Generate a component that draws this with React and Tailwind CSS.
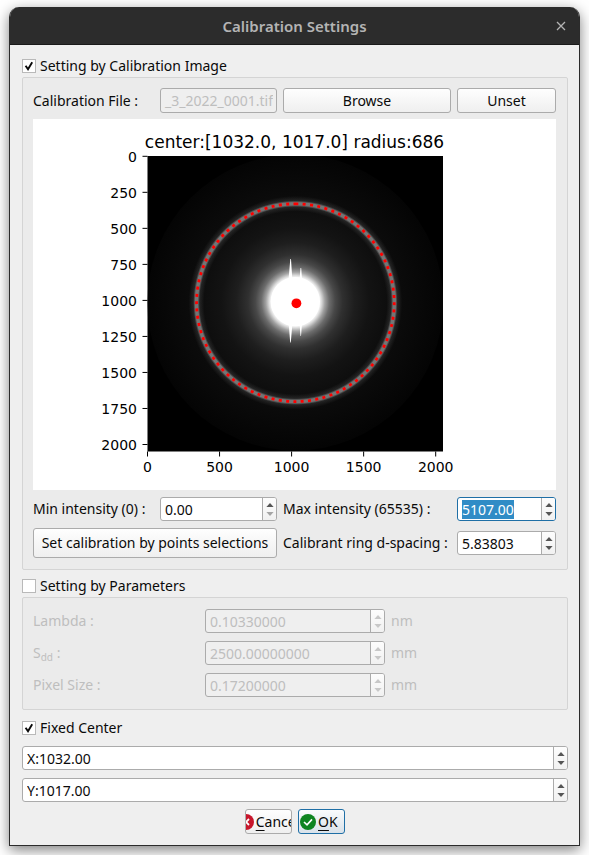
import React, { useEffect, useRef, useState } from "react";

function Arrow({ up }) {
  return (
    <svg width="8" height="4" viewBox="0 0 8 4" fill="currentColor" aria-hidden="true">
      <path d={up ? "M4 0 L7.6 4 H0.4 Z" : "M4 4 L7.6 0 H0.4 Z"} />
    </svg>
  );
}

function SpinBox({ id, label, value, disabled, active, atMin }) {
  const ref = useRef(null);
  const [text, setText] = useState(value);

  useEffect(() => {
    if (active && ref.current) {
      ref.current.focus();
      ref.current.select();
    }
  }, [active]);

  return (
    <div
      className={
        "flex h-6 w-full min-w-0 overflow-hidden rounded-[3px] border " +
        (active ? "border-[#1f6fa6] bg-white" : disabled ? "border-[#ababab] bg-[#efefef]" : "border-[#ababab] bg-white")
      }
    >
      <input
        id={id}
        ref={ref}
        type="text"
        aria-label={label}
        value={text}
        disabled={disabled}
        onChange={(e) => setText(e.target.value)}
        className="h-full w-full min-w-0 flex-1 bg-transparent px-1 leading-[17px] outline-none selection:bg-[#308cc6] selection:text-white disabled:text-[#bebebe]"
      />
      <div
        className={
          "flex w-[14px] shrink-0 flex-col border-l border-[#ababab] bg-linear-to-b from-[#fdfdfd] to-[#f1f1f1] " +
          (disabled ? "text-[#c8c8c8]" : "text-[#555555]")
        }
      >
        <button type="button" aria-label="Increase" disabled={disabled} className="flex flex-1 items-center justify-center pt-[2px]">
          <Arrow up />
        </button>
        <button
          type="button"
          aria-label="Decrease"
          disabled={disabled}
          className={"flex flex-1 items-center justify-center pb-[2px] " + (atMin ? "text-[#a5a5a5]" : "")}
        >
          <Arrow />
        </button>
      </div>
    </div>
  );
}

function Check({ label, initial }) {
  const [on, setOn] = useState(initial);
  return (
    <label className="flex h-[22px] items-center gap-1 self-start">
      <span className="relative flex">
        <input
          type="checkbox"
          checked={on}
          onChange={() => setOn(!on)}
          className="size-[14px] appearance-none border border-[#b9b9b9] bg-white outline-none"
        />
        {on && (
          <svg className="pointer-events-none absolute inset-0" width="14" height="14" viewBox="0 0 14 14" fill="none" stroke="#0a0a0a" aria-hidden="true">
            <path d="M3.6 6.8 L6 10.2 L10.2 3.2" strokeWidth="1.9" />
          </svg>
        )}
      </span>
      {label}
    </label>
  );
}

function PushButton({ children, className = "h-[25px]" }) {
  return (
    <button
      type="button"
      className={"w-full overflow-hidden rounded-[3px] border border-[#ababab] bg-linear-to-b from-[#fefefe] to-[#efefef] whitespace-nowrap " + className}
    >
      {children}
    </button>
  );
}

const X_TICKS = [0, 500, 1000, 1500, 2000];
const Y_TICKS = [0, 250, 500, 750, 1000, 1250, 1500, 1750, 2000];
const SCALE = 0.1441;

function DiffractionPlot() {
  return (
    <svg
      className="h-full w-full bg-white font-['DejaVu_Sans',sans-serif]"
      viewBox="33 119 523 371"
      role="img"
      aria-label="Calibration image"
    >
      <defs>
        <radialGradient id="field" gradientUnits="userSpaceOnUse" cx="295.3" cy="301.7" r="148">
          <stop offset="0.16" stopColor="#ffffff" />
          <stop offset="0.175" stopColor="#e0e0e0" />
          <stop offset="0.2" stopColor="#a0a0a0" />
          <stop offset="0.23" stopColor="#6c6c6c" />
          <stop offset="0.27" stopColor="#484848" />
          <stop offset="0.32" stopColor="#303030" />
          <stop offset="0.4" stopColor="#1e1e1e" />
          <stop offset="0.5" stopColor="#131313" />
          <stop offset="0.62" stopColor="#0e0e0e" />
          <stop offset="0.72" stopColor="#0b0b0b" />
          <stop offset="1" stopColor="#040404" />
        </radialGradient>
        <radialGradient id="ring" gradientUnits="userSpaceOnUse" cx="295.4" cy="302.7" r="110">
          <stop offset="0.83" stopColor="#808080" stopOpacity="0" />
          <stop offset="0.87" stopColor="#808080" stopOpacity="0.2" />
          <stop offset="0.888" stopColor="#808080" stopOpacity="0.9" />
          <stop offset="0.91" stopColor="#808080" stopOpacity="0.9" />
          <stop offset="0.928" stopColor="#808080" stopOpacity="0.2" />
          <stop offset="0.97" stopColor="#808080" stopOpacity="0" />
        </radialGradient>
        <clipPath id="axes">
          <rect x="147.5" y="156" width="295.5" height="295.5" />
        </clipPath>
      </defs>
      <g clipPath="url(#axes)">
        <rect x="147" y="155" width="297" height="298" fill="#000000" />
        <circle cx="295.3" cy="302.5" r="148" fill="url(#field)" />
        <circle cx="295.4" cy="302.7" r="110" fill="url(#ring)" />
        <circle cx="295.3" cy="301.7" r="24.6" fill="#ffffff" />
        <path
          d="M290.3 259 L291 259 L292.3 279 H288.6 Z M300.5 268 L301.2 268 L302 279 H299.6 Z M288.8 325 H292.3 L290.8 342.5 L290.2 342.5 Z M299.6 324 H302 L301 336 L300.5 336 Z"
          fill="#ffffff"
        />
        <path
          d="M295.4 203.8 A98.9 98.9 0 0 1 295.4 401.6 A98.9 98.9 0 0 1 295.4 203.8"
          fill="none"
          stroke="#ff0000"
          strokeWidth="2.8"
          strokeDasharray="3 4.36"
        />
        <circle cx="296.4" cy="303.3" r="4.9" fill="#ff0000" />
      </g>
      <text x="294.5" y="148" textAnchor="middle" fontSize="17">
        center:[1032.0, 1017.0] radius:686
      </text>
      {Y_TICKS.map((t) => (
        <g key={t}>
          <path d={`M142.5 ${156.3 + t * SCALE} h5`} stroke="#000000" />
          <text x="137" y={161.6 + t * SCALE} textAnchor="end" fontSize="14">
            {t}
          </text>
        </g>
      ))}
      {X_TICKS.map((t) => (
        <g key={t}>
          <path d={`M${147.5 + t * SCALE} 451.5 v5`} stroke="#000000" />
          <text x={147.5 + t * SCALE} y="472" textAnchor="middle" fontSize="14">
            {t}
          </text>
        </g>
      ))}
    </svg>
  );
}

function FileField() {
  const ref = useRef(null);
  useEffect(() => {
    ref.current.scrollLeft = ref.current.scrollWidth;
  }, []);
  return (
    <input
      id="calibration-file"
      ref={ref}
      type="text"
      disabled
      defaultValue="_3_2022_0001.tif"
      className="h-[25px] w-full min-w-0 rounded-[3px] border border-[#ababab] bg-[#efefef] pr-[3px] text-right text-[#bebebe]"
    />
  );
}

const PARAMETERS = [
  { id: "lambda", name: "Lambda :", value: "0.10330000", unit: "nm" },
  {
    id: "sdd",
    name: (
      <>
        S<sub className="text-[10px]">dd</sub> :
      </>
    ),
    value: "2500.00000000",
    unit: "mm",
  },
  { id: "pixel-size", name: "Pixel Size :", value: "0.17200000", unit: "mm" },
];

export default function App() {
  return (
    <div className="min-h-screen bg-white px-[9px] pt-[7px] pb-[9px] font-['Noto_Sans','Open_Sans',sans-serif] text-sm leading-5 text-[#0a0a0a]">
      <section className="overflow-hidden rounded-t-[10px] border-x border-b border-[#2b2b2b] bg-[#efefef] shadow-[0_4px_14px_rgba(0,0,0,0.5)]">
        <header className="grid h-[38px] grid-cols-[1fr_auto_1fr] items-center border-b border-[#1a1a1a] bg-[#2c2c2c] text-[#b4b4b4]">
          <h1 className="col-start-2 text-[15px] font-semibold">Calibration Settings</h1>
          <button type="button" aria-label="Close" className="mr-[13px] justify-self-end">
            <svg width="10" height="10" viewBox="0 0 10 10" fill="none" stroke="currentColor" strokeWidth="1.3">
              <path d="M1 1 L9 9 M9 1 L1 9" />
            </svg>
          </button>
        </header>

        <main className="flex flex-col pt-[10px] pr-[11px] pb-[11px] pl-3">
          <Check label="Setting by Calibration Image" initial />
          <div className="grid grid-cols-[121px_117px_1fr_99px] items-center gap-[6px] rounded-[2px] border border-[#d4d4d4] bg-[#ebebeb] pt-[10px] pr-[11px] pb-[11px] pl-[10px] whitespace-nowrap">
            <label htmlFor="calibration-file">Calibration File :</label>
            <FileField />
            <PushButton>Browse</PushButton>
            <PushButton>Unset</PushButton>

            <div className="col-span-4 h-[371px]">
              <DiffractionPlot />
            </div>

            <label htmlFor="min-intensity">Min intensity (0) :</label>
            <div className="flex h-[26px] items-center">
              <SpinBox id="min-intensity" value="0.00" atMin />
            </div>
            <label htmlFor="max-intensity">Max intensity (65535) :</label>
            <SpinBox id="max-intensity" value="5107.00" active />

            <div className="col-span-2">
              <PushButton className="h-[30px]">Set calibration by points selections</PushButton>
            </div>
            <label htmlFor="d-spacing">Calibrant ring d-spacing :</label>
            <SpinBox id="d-spacing" value="5.83803" />
          </div>

          <div className="mt-[5px] flex">
            <Check label="Setting by Parameters" initial={false} />
          </div>
          <div className="flex flex-col gap-2 rounded-[2px] border border-[#d4d4d4] bg-[#ebebeb] pt-[11px] pr-[11px] pb-3 pl-[10px] text-[#bebebe]">
            {PARAMETERS.map((p) => (
              <div key={p.id} className="grid h-6 grid-cols-[166px_180px_1fr] items-center gap-[6px]">
                <label htmlFor={p.id}>{p.name}</label>
                <SpinBox id={p.id} value={p.value} disabled />
                <span>{p.unit}</span>
              </div>
            ))}
          </div>

          <div className="mt-[7px] flex">
            <Check label="Fixed Center" initial />
          </div>
          <div className="mt-[7px] flex flex-col gap-2">
            <SpinBox label="Center X" value="X:1032.00" />
            <SpinBox label="Center Y" value="Y:1017.00" />
          </div>

          <div className="mt-[7px] flex justify-center gap-[6px]">
            <button
              type="button"
              className="flex h-[25px] w-[47px] items-center justify-center gap-[2px] overflow-hidden rounded-[3px] border border-[#ababab] bg-linear-to-b from-[#fefefe] to-[#efefef]"
            >
              <svg className="shrink-0" width="16" height="16" viewBox="0 0 16 16" fill="none" aria-hidden="true">
                <circle cx="8" cy="8" r="8" fill="#c7162b" />
                <path d="M5 5 L11 11 M11 5 L5 11" stroke="#ffffff" strokeWidth="1.8" />
              </svg>
              <span>
                <span className="underline underline-offset-3">C</span>ancel
              </span>
            </button>
            <button
              type="button"
              className="flex h-[25px] w-[47px] items-center gap-[2px] overflow-hidden rounded-[3px] border border-[#1f6fa6] bg-linear-to-b from-[#fafbfc] to-[#d9e2ea] pl-px"
            >
              <svg className="shrink-0" width="16" height="16" viewBox="0 0 16 16" fill="none" aria-hidden="true">
                <circle cx="8" cy="8" r="8" fill="#0e8420" />
                <path d="M4 8 L7 10.8 L12 5.4" stroke="#ffffff" strokeWidth="1.6" />
              </svg>
              <span>
                <span className="underline underline-offset-3">O</span>K
              </span>
            </button>
          </div>
        </main>
      </section>
    </div>
  );
}
